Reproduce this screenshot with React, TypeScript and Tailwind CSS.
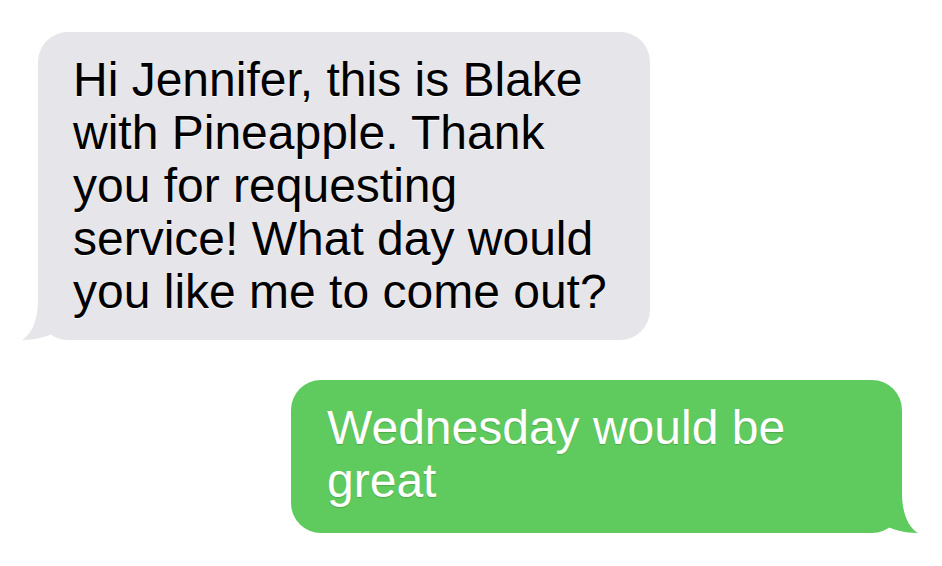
export default function App() {
  return (
    <div className="min-h-[566px] w-[942px] bg-white flex flex-col pt-[32px] font-['Liberation_Sans',Arial,sans-serif]">
      <IncomingBubble>
        Hi Jennifer, this is Blake with Pineapple. Thank you for requesting
        service! What day would you like me to come out?
      </IncomingBubble>

      <OutgoingBubble>Wednesday would be great</OutgoingBubble>
    </div>
  );
}

function IncomingBubble({ children }: { children: React.ReactNode }) {
  return (
    <div className="relative self-start ml-[38px] w-[612px] rounded-[30px] bg-[#e5e5ea] pl-[35px] pr-[24px] pt-[21px] pb-[22px]">
      <p className="relative z-10 text-[48px] leading-[53px] text-black [text-shadow:0_1px_1px_rgba(255,255,255,0.9)]">
        {children}
      </p>
      <svg
        className="absolute left-[-16px] bottom-0 overflow-visible"
        width="70"
        height="40"
        viewBox="0 0 70 40"
      >
        <path
          d="M16,0 C16,20 10,34 0,40 C13,40 26,37 35,31 C42,37 53,40 68,40 L68,0 Z"
          fill="#e5e5ea"
        />
      </svg>
    </div>
  );
}

function OutgoingBubble({ children }: { children: React.ReactNode }) {
  return (
    <div className="relative self-end mr-[40px] mt-[40px] w-[611px] rounded-[30px] bg-[#5fcb5e] pl-[36px] pr-[40px] pt-[21px] pb-[26px]">
      <p className="relative z-10 text-[48px] leading-[53px] text-white [text-shadow:0_1px_1px_rgba(0,0,0,0.18)]">
        {children}
      </p>
      <svg
        className="absolute right-[-16px] bottom-0 overflow-visible"
        width="70"
        height="40"
        viewBox="0 0 70 40"
      >
        <path
          d="M54,0 C54,20 60,34 70,40 C57,40 44,37 35,31 C28,37 17,40 2,40 L2,0 Z"
          fill="#5fcb5e"
        />
      </svg>
    </div>
  );
}
